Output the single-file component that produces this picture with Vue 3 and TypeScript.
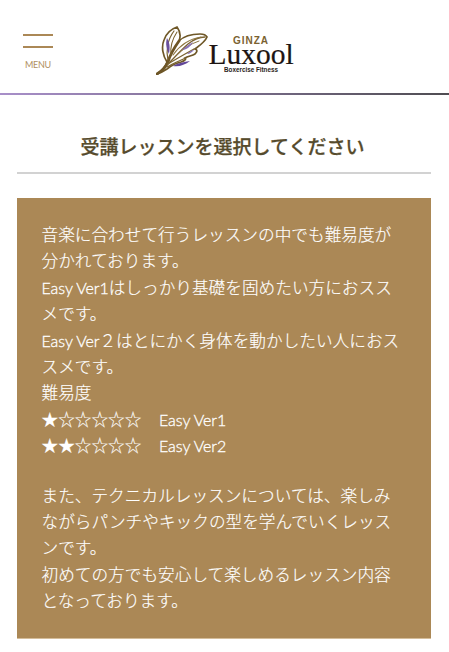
<script setup lang="ts">
interface Line { latin?: string; text: string }
const lines: Line[] = [
  { text: '音楽に合わせて行うレッスンの中でも難易度が分かれております。' },
  { latin: 'Easy Ver1', text: 'はしっかり基礎を固めたい方におススメです。' },
  { latin: 'Easy Ver', text: '２はとにかく身体を動かしたい人におススメです。' },
  { text: '難易度' },
]
const ratings = [
  { stars: '★☆☆☆☆☆', name: 'Easy Ver1' },
  { stars: '★★☆☆☆☆', name: 'Easy Ver2' },
]
const after: string[] = [
  'また、テクニカルレッスンについては、楽しみながらパンチやキックの型を学んでいくレッスンです。',
  '初めての方でも安心して楽しめるレッスン内容となっております。',
]
</script>

<template>
  <div class="page">
    <header class="header">
      <div class="menu">
        <span class="bar"></span>
        <span class="bar second"></span>
        <span class="menu-label">MENU</span>
      </div>
      <div class="logo">
        <svg class="wing" width="52" height="49" viewBox="0 0 52 49" fill="none" stroke-linecap="round">
          <path d="M1 48C5 45 9 41 11 36C7 30 5 21 8 14C10 8 15 3 21 1C24 5 25 10 23 15C28 10 37 8 44 8C47 8 50 9 51 11C49 16 43 20 39 23C42 24 41 26 39 28C36 30 32 30 29 32C31 33 28 35 25 36C20 37 15 40 11 43C8 45 4 47 1 48Z" stroke="#6f5828" stroke-width="1.7"/>
          <path d="M1 48C6 45 10 41 12 36C14 29 18 22 23 15" stroke="#6d5526" stroke-width="2.8"/>
          <path d="M12 38C18 32 24 25 32 18C37 14 43 11 49 11" stroke="#7a6230" stroke-width="1.3"/>
          <path d="M12 38C20 33 29 28 38 23" stroke="#7a6230" stroke-width="1.3"/>
          <path d="M11 41C17 38 24 34 30 32" stroke="#7a6230" stroke-width="1.3"/>
          <path d="M12 34C10 26 11 14 18 5" stroke="#7a6230" stroke-width="1.2"/>
          <path d="M15 29C14 21 17 12 21 6" stroke="#7a6230" stroke-width="1.1"/>
          <path d="M17 29C24 19 33 13 45 11" stroke="#8d7642" stroke-width="1.1"/>
          <path d="M21 29C27 23 34 18 43 15" stroke="#8d7642" stroke-width="1"/>
          <path d="M11 12C9 18 11 24 13 28C14 22 14 17 11 12Z" fill="#6a4f9c"/>
          <path d="M17 40C22 37 28 36 34 35C29 39 23 41 17 40Z" fill="#62479a"/>
          <path d="M26 24C29 21 33 18 37 16C35 20 31 24 26 24Z" fill="#8a74b5"/>
          <path d="M31 28C33 26 36 24 38 24C36 26 34 28 31 28Z" fill="#8a74b5"/>
        </svg>
        <div class="wordmark">
          <span class="ginza">GINZA</span>
          <span class="luxool">Luxool</span>
          <span class="tagline">Boxercise Fitness</span>
        </div>
      </div>
    </header>

    <main class="main">
      <h1 class="title">受講レッスンを選択してください</h1>
      <section class="box">
        <p v-for="line in lines" :key="line.text"><span v-if="line.latin" class="latin">{{ line.latin }}</span>{{ line.text }}</p>
        <p v-for="r in ratings" :key="r.name" class="rating">
          <span class="stars">{{ r.stars }}</span><span class="latin">{{ r.name }}</span>
        </p>
        <div class="spacer"></div>
        <p v-for="line in after" :key="line">{{ line }}</p>
      </section>
    </main>
  </div>
</template>

<style>
html, body { margin: 0; background: #fff; }
</style>

<style scoped>
.page {
  height: 652px;
  overflow: hidden;
  background: #fff;
  font-family: "Lato", "Noto Sans CJK JP", sans-serif;
}
.header {
  position: relative;
  box-sizing: border-box;
  height: 95px;
  border-top: 11.5px solid #ab8856;
  border-bottom: 2px solid;
  border-image: linear-gradient(90deg, #a88fc9, #4f4d52) 1;
  border-image-slice: 0 0 1 0;
  display: flex;
  justify-content: center;
  padding-top: 14.5px;
}
.menu {
  position: absolute;
  left: 23px;
  top: 22.5px;
  width: 30px;
  display: flex;
  flex-direction: column;
  align-items: center;
}
.bar { width: 30px; height: 2.5px; background: #ab8856; }
.bar.second { margin-top: 9.5px; }
.menu-label {
  margin-top: 11px;
  font-size: 9px;
  letter-spacing: -0.3px;
  line-height: 12px;
  color: #b0905f;
}
.logo {
  display: flex;
  align-items: flex-start;
  margin-left: 1px;
}
.wing { display: block; }
.wordmark {
  display: flex;
  flex-direction: column;
  align-items: center;
  padding-top: 10px;
}
.ginza {
  font-family: "Liberation Sans", sans-serif;
  font-weight: 700;
  font-size: 10px;
  line-height: 10px;
  letter-spacing: 1px;
  color: #7b6230;
}
.luxool {
  font-family: "Liberation Serif", serif;
  font-size: 29.5px;
  line-height: 17px;
  color: #1d1512;
  -webkit-text-stroke: 0.2px #1d1512;
}
.tagline {
  margin-top: 2px;
  font-family: "Liberation Sans", sans-serif;
  font-weight: 700;
  font-size: 6.3px;
  line-height: 9px;
  color: #2a2320;
}
.main { padding: 0 18px 0 17px; }
.title {
  margin: 0;
  height: 79px;
  box-sizing: border-box;
  padding: 38px 3px 0 0;
  border-bottom: 2px solid #d2d2d2;
  text-align: center;
  font-size: 19px;
  line-height: 27px;
  font-weight: 500;
  -webkit-text-stroke: 0.25px #564b2c;
  color: #564b2c;
}
.box {
  box-sizing: border-box;
  margin-top: 24px;
  height: 441px;
  padding: 24px 24px 24px 24.5px;
  background: #ab8856;
  border-bottom: 1px solid #d4bd9a;
  color: #fff;
  font-size: 16.67px;
  font-weight: 300;
  -webkit-text-stroke: 0.15px #fff;
  line-height: 26.4px;
}
.box p { margin: 0; }
.latin { font-size: 16px; letter-spacing: -0.05px; -webkit-text-stroke: 0.3px #fff; }
.stars { display: inline-block; width: 117.5px; }
.spacer { height: 23px; }
</style>
